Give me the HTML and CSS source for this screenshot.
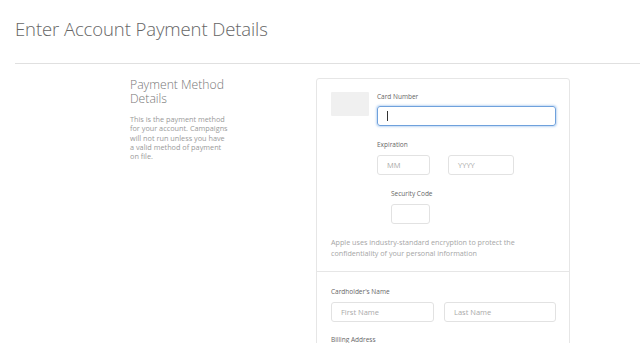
FILE: index.html
```html
<!DOCTYPE html>
<html>
<head>
<meta charset="utf-8">
<link rel="stylesheet" href="styles.css">
</head>
<body>
<header class="page-head">
  <h1 class="title">Enter Account Payment Details</h1>
</header>
<hr class="rule">
<main class="main">
  <aside class="intro">
    <h2 class="intro-title"><span class="line">Payment Method</span><span class="line">Details</span></h2>
    <p class="intro-text">This is the payment method for your account. Campaigns will not run unless you have a valid method of payment on file.</p>
  </aside>
  <section class="panel">
    <div class="card-sec">
      <div class="card-img"></div>
      <div class="card-fields">
        <label class="lbl">Card Number</label>
        <div class="input input-card focus"><span class="caret"></span></div>
        <label class="lbl lbl-exp">Expiration</label>
        <div class="exp-row">
          <div class="input input-mm">MM</div>
          <div class="input input-yy">YYYY</div>
        </div>
        <div class="sec">
          <label class="lbl">Security Code</label>
          <div class="input input-sc"></div>
        </div>
      </div>
    </div>
    <p class="enc">Apple uses industry-standard encryption to protect the confidentiality of your personal information</p>
    <div class="holder-sec">
      <label class="lbl">Cardholder's Name</label>
      <div class="name-row">
        <div class="input input-first">First Name</div>
        <div class="input input-last">Last Name</div>
      </div>
      <label class="lbl lbl-bill">Billing Address</label>
    </div>
  </section>
</main>
</body>
</html>
```

FILE: styles.css
```css
* { box-sizing: border-box; }
html, body { margin: 0; padding: 0; background: #fff; }
body {
  font-family: "Open Sans", "Liberation Sans", sans-serif;
  width: 640px;
  height: 343px;
  overflow: hidden;
}
.page-head { padding: 15px 0 0 15px; height: 63px; }
.title {
  margin: 0;
  font-weight: 300;
  font-size: 18.5px;
  line-height: 28px;
  color: #666;
  letter-spacing: -0.1px;
}
.rule {
  margin: 0 0 0 15px;
  border: 0;
  border-top: 1px solid #e0e0e0;
  height: 0;
}
.main {
  display: flex;
  padding-left: 130px;
  padding-top: 14px;
}
.intro { width: 186px; padding-top: 0; }
.intro-title {
  margin: 0;
  font-weight: 300;
  font-size: 12.2px;
  color: #777;
  display: flex;
  flex-direction: column;
}
.intro-title .line { display: block; line-height: 14px; }
.intro-text {
  margin: 9px 0 0;
  width: 98px;
  font-size: 7.3px;
  line-height: 9.3px;
  color: #9a9a9a;
}
.panel {
  width: 254px;
  height: 300px;
  border: 1px solid #e6e6e6;
  border-radius: 3px;
}
.card-sec {
  display: flex;
  padding: 13px 0 0 14px;
}
.card-img {
  width: 38px;
  height: 24px;
  background: #f0f0f0;
  border-radius: 1px;
}
.card-fields { margin-left: 8px; }
.lbl {
  display: block;
  font-size: 6.5px;
  line-height: 9px;
  color: #666;
}
.input {
  height: 20px;
  border: 1px solid #e2e2e2;
  border-radius: 3px;
  font-size: 7.5px;
  line-height: 18px;
  color: #aaa;
  padding-left: 9px;
}
.input-card { width: 179px; margin-top: 5px; position: relative; }
.focus {
  border: 1px solid #6fa1dc;
  box-shadow: 0 0 2px 1px rgba(120,170,230,0.45);
}
.caret {
  position: absolute;
  left: 9px;
  top: 4px;
  width: 1px;
  height: 10px;
  background: #333;
}
.lbl-exp { margin-top: 14px; }
.exp-row { display: flex; gap: 18px; margin-top: 6px; }
.input-mm { width: 53px; }
.input-yy { width: 66px; }
.sec { margin-left: 14px; margin-top: 14px; }
.sec .input { margin-top: 6px; }
.input-sc { width: 39px; }
.enc {
  margin: 13px 0 0 14px;
  width: 205px;
  font-size: 7.2px;
  line-height: 11px;
  color: #a6a6a6;
}
.holder-sec {
  border-top: 1px solid #e6e6e6;
  margin-top: 12px;
  padding: 15px 0 0 14px;
}
.name-row { display: flex; gap: 10px; margin-top: 6px; }
.input-first { width: 103px; }
.input-last { width: 112px; }
.lbl-bill { margin-top: 13px; }
```
